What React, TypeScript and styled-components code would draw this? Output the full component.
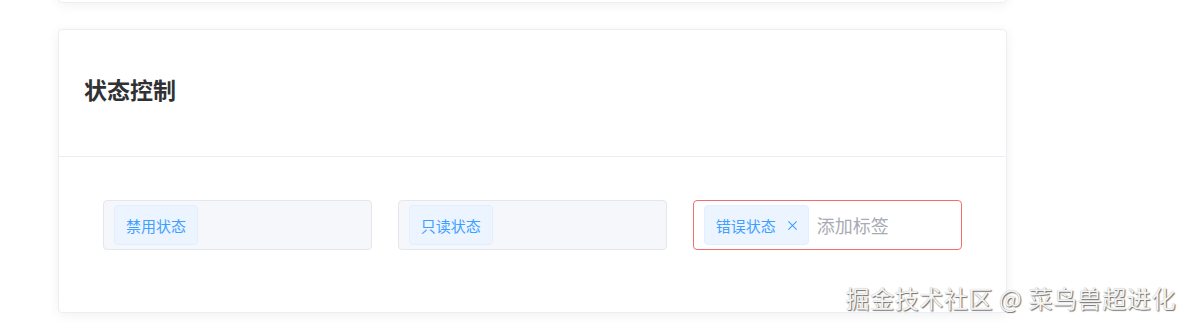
import React from "react";
import styled, { createGlobalStyle } from "styled-components";

const Global = createGlobalStyle`
  html, body { margin: 0; padding: 0; background: #ffffff; }
  body { font-family: "Noto Sans CJK SC", "Noto Sans", sans-serif; overflow: hidden; }
`;

const Page = styled.div`
  position: relative;
  width: 1190px;
  height: 329px;
  overflow: hidden;
  padding-left: 58px;
  box-sizing: border-box;
  display: flex;
  flex-direction: column;
  gap: 26px;
`;

const Card = styled.div<{ $stub?: boolean }>`
  width: 949px;
  box-sizing: border-box;
  background: #fff;
  border: 1px solid #ebeef5;
  border-radius: 4px;
  box-shadow: 0 2px 12px 0 rgba(0, 0, 0, 0.06);
  ${(p) => (p.$stub ? "height: 42px; margin-top: -39px; flex-shrink: 0;" : "")}
`;

const Header = styled.div`
  height: 127px;
  box-sizing: border-box;
  padding: 0 25px 8px;
  display: flex;
  align-items: center;
  border-bottom: 1px solid #ebeef5;
`;

const Title = styled.h3`
  margin: 0;
  font-size: 23px;
  font-weight: 700;
  color: #303133;
`;

const Body = styled.div`
  padding: 43px 44px 62px;
  display: flex;
  gap: 25.5px;
`;

const TagInput = styled.div<{ $variant: "disabled" | "readonly" | "error" }>`
  width: 270px;
  height: 50px;
  box-sizing: border-box;
  border-radius: 4px;
  padding: 4px 10px;
  display: flex;
  align-items: center;
  gap: 8px;
  background: ${(p) => (p.$variant === "error" ? "#fff" : "#f5f7fa")};
  border: 1px solid ${(p) => (p.$variant === "error" ? "#f56c6c" : "#e4e7ed")};
`;

const Tag = styled.span`
  height: 40px;
  box-sizing: border-box;
  display: inline-flex;
  align-items: center;
  padding: 0 11px;
  gap: 11px;
  background: #ecf5ff;
  border: 1px solid #e2efff;
  border-radius: 4px;
  color: #409eff;
  font-size: 15px;
  line-height: 1;
`;

const Close = styled.svg`
  width: 11px;
  height: 11px;
  margin-right: -1px;
`;

const Placeholder = styled.span`
  color: #a8abb2;
  font-size: 18px;
  line-height: 1;
`;

const Watermark = styled.div`
  position: absolute;
  right: 14px;
  bottom: 14px;
  font-size: 24px;
  color: #f4f4f4;
  text-shadow: 1px 1px 1px rgba(0, 0, 0, 0.55), 0 0 1px rgba(0, 0, 0, 0.3);
  white-space: nowrap;
  letter-spacing: 0.6px;
`;

export default function App() {
  return (
    <>
      <Global />
      <Page>
        <Card $stub />
        <Card>
          <Header>
            <Title>状态控制</Title>
          </Header>
          <Body>
            <TagInput $variant="disabled">
              <Tag>禁用状态</Tag>
            </TagInput>
            <TagInput $variant="readonly">
              <Tag>只读状态</Tag>
            </TagInput>
            <TagInput $variant="error">
              <Tag>
                错误状态
                <Close viewBox="0 0 12 12">
                  <path d="M1.5 1.5 L10.5 10.5 M10.5 1.5 L1.5 10.5" stroke="#409eff" strokeWidth="1.2" fill="none" />
                </Close>
              </Tag>
              <Placeholder>添加标签</Placeholder>
            </TagInput>
          </Body>
        </Card>
        <Watermark>掘金技术社区 @ 菜鸟兽超进化</Watermark>
      </Page>
    </>
  );
}
